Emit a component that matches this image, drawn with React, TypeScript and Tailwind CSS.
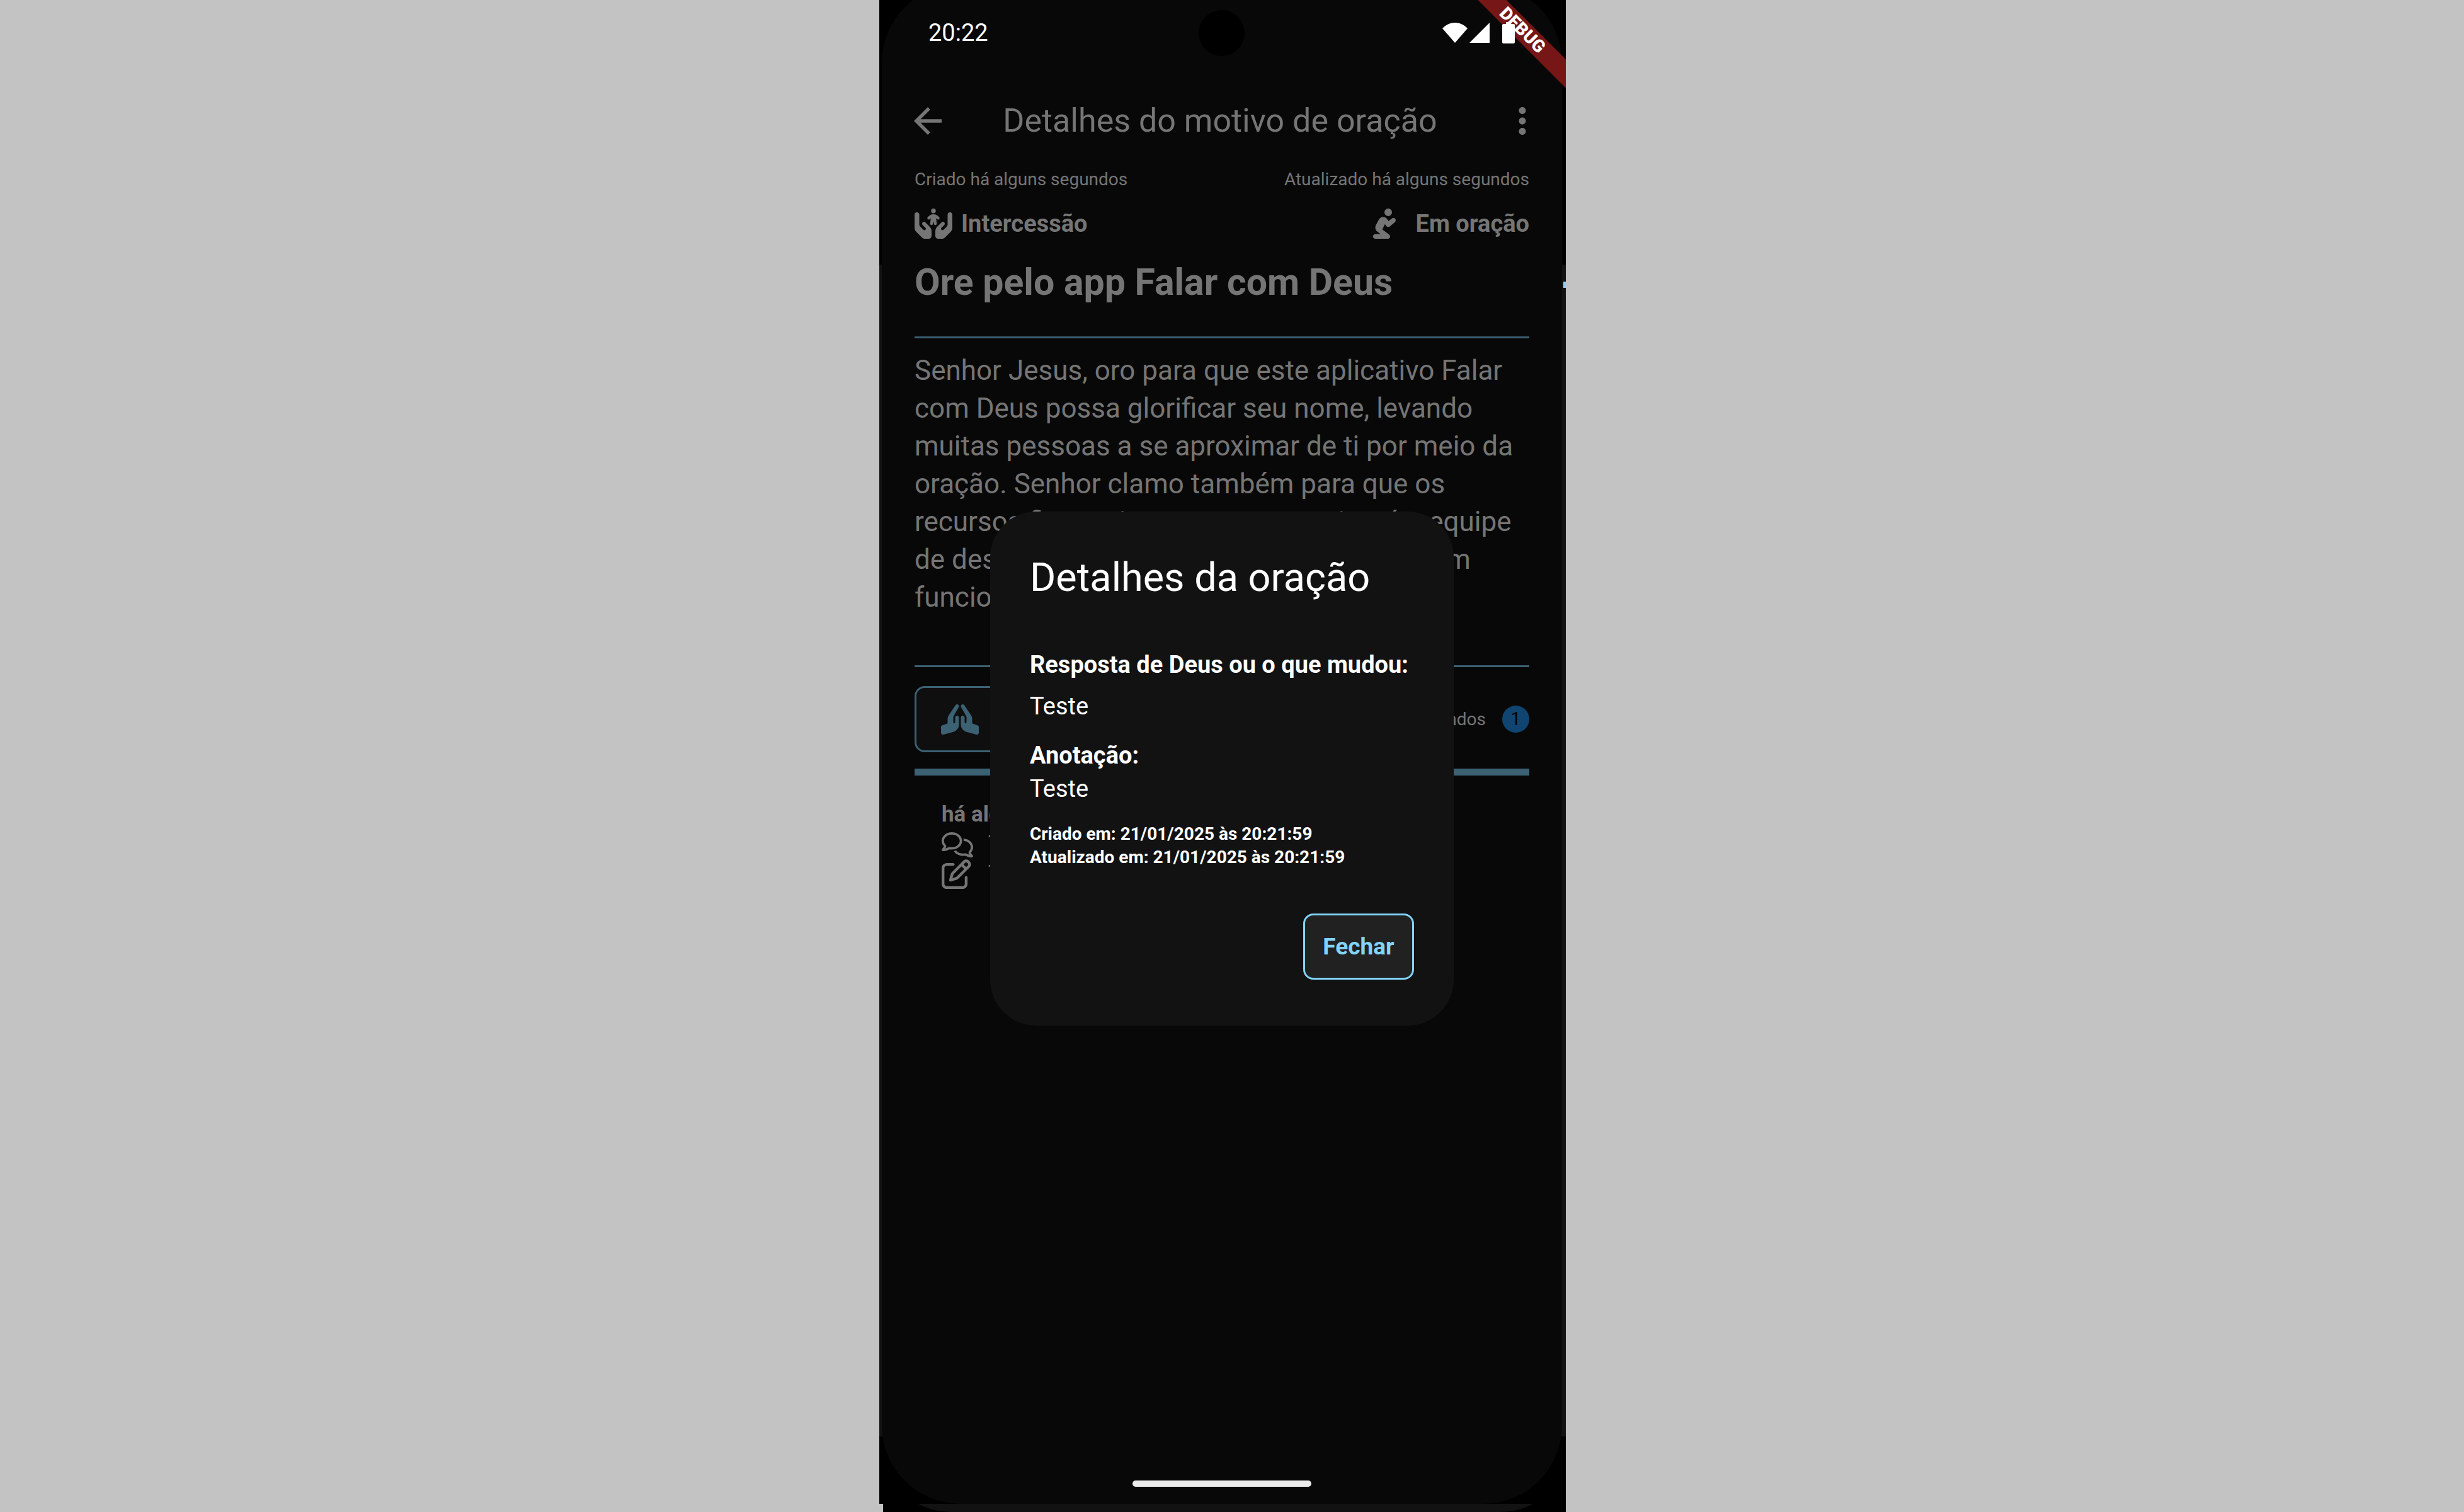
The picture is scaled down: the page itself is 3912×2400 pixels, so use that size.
import type { ReactNode } from "react";
import {
  FaHandsHoldingChild,
  FaHandsPraying,
  FaPersonPraying,
  FaRegComments,
  FaRegPenToSquare,
} from "react-icons/fa6";
import { MdArrowBack, MdMoreVert } from "react-icons/md";

function StatusBar() {
  return (
    <div className="flex h-[104px] items-center justify-between pl-[78px] text-white">
      <time className="text-[38px] leading-[46px]">20:22</time>
      <div className="flex h-8 w-[196px] items-center">
        <svg className="h-8 w-10" viewBox="0 0 40 32" fill="currentColor" aria-hidden="true">
          <path d="M20 32 0 9C12-3 28-3 40 9Z" />
        </svg>
        <svg className="ml-[3px] h-8 w-8" viewBox="0 0 32 32" fill="currentColor" aria-hidden="true">
          <path d="M32 0V32H0Z" />
        </svg>
        <svg className="relative z-10 ml-5 h-[34px] w-5" viewBox="0 0 20 34" fill="currentColor" aria-hidden="true">
          <path d="M6 0h8v3h4a2 2 0 0 1 2 2v27a2 2 0 0 1-2 2H2a2 2 0 0 1-2-2V5a2 2 0 0 1 2-2h4Z" />
        </svg>
      </div>
    </div>
  );
}

function Divider({ thick = false }: { thick?: boolean }) {
  return <hr className={thick ? "h-[11px] border-0 bg-[#3b6173]" : "h-[3px] border-0 bg-[#3b6173]"} />;
}

function Note({ icon, text }: { icon: ReactNode; text: string }) {
  return (
    <li className="flex h-[47px] items-center gap-5">
      <span className="w-[54px]">{icon}</span>
      <span className="text-[35px]">{text}</span>
    </li>
  );
}

function PrayerDialog() {
  return (
    <div
      role="dialog"
      aria-modal="true"
      aria-labelledby="dialog-title"
      className="absolute top-[812px] right-[178px] left-[176px] rounded-[73px] bg-[#121212] px-[63px] pt-[63px] pb-[73px] text-white"
    >
      <h2 id="dialog-title" className="text-[63px] leading-[84px]">
        Detalhes da oração
      </h2>
      <div className="mt-[70px] text-[38px] leading-[53px]">
        <p className="font-bold">Resposta de Deus ou o que mudou:</p>
        <p className="mt-[13px]">Teste</p>
        <p className="mt-[25px] font-bold">Anotação:</p>
        <p>Teste</p>
      </div>
      <div className="mt-[26px] text-[28px] leading-[37px] font-bold">
        <p>Criado em: 21/01/2025 às 20:21:59</p>
        <p>Atualizado em: 21/01/2025 às 20:21:59</p>
      </div>
      <div className="mt-[71px] flex justify-end">
        <button
          type="button"
          className="h-[105px] w-[176px] rounded-[16px] border-[3px] border-[#81d4fa] bg-[#212121] text-[37px] font-bold text-[#81d4fa]"
        >
          Fechar
        </button>
      </div>
    </div>
  );
}

export default function App() {
  return (
    <div className="flex min-h-screen justify-center bg-[#c3c3c3] pr-[30px] font-['Roboto',sans-serif]">
      <div className="relative w-full max-w-[1090px] overflow-hidden bg-black text-[#757575]">
        <div className="absolute inset-x-0 top-[420px] bottom-[120px] bg-[#121212]" />
        <div className="absolute -top-[25px] right-[6px] bottom-[13px] left-1 rounded-[125px] bg-[#080808]" />
        <div className="absolute inset-x-0 bottom-0 h-[13px] overflow-hidden">
          <div className="absolute -right-[8px] bottom-0 left-[2px] h-[240px] rounded-[112px] bg-[#121212]" />
        </div>
        <div className="absolute bottom-0 left-0 h-[13px] w-[6px] bg-[#c3c3c3]" />
        <div className="absolute top-[447px] right-0 h-[10px] w-1 bg-[#81d4fa]" />
        <div className="absolute top-[16px] left-[507px] size-[73px] rounded-full bg-black" />
        <div className="absolute top-[32px] left-[871px] flex h-[32px] w-[300px] rotate-45 items-center justify-center bg-[#761616] text-[28px] font-black text-white">
          DEBUG
        </div>

        <div className="relative">
          <StatusBar />
          <header className="flex h-[176px] items-center justify-between pr-[36px] pl-[44px]">
            <button type="button" aria-label="Voltar">
              <MdArrowBack className="size-[66px]" />
            </button>
            <h1 className="pr-4 text-[52px]">Detalhes do motivo de oração</h1>
            <button type="button" aria-label="Mais opções">
              <MdMoreVert className="size-[66px]" />
            </button>
          </header>

          <main className="mr-[58px] ml-[56px] flex flex-col">
            <div className="-mt-[11px] flex justify-between text-[28px] leading-[32px]">
              <span>Criado há alguns segundos</span>
              <span>Atualizado há alguns segundos</span>
            </div>
            <div className="mt-[30px] flex h-[48px] items-center justify-between text-[38px] font-bold">
              <span className="flex items-center gap-[14px]">
                <FaHandsHoldingChild className="h-[48px] w-[60px]" />
                Intercessão
              </span>
              <span className="flex items-center gap-[26px]">
                <FaPersonPraying className="size-[48px]" />
                Em oração
              </span>
            </div>
            <h2 className="mt-[29px] mb-[46px] text-[59px] leading-[80px] font-bold">Ore pelo app Falar com Deus</h2>
            <Divider />
            <p className="mt-[21px] mb-[78px] text-[44px] leading-[60px] whitespace-nowrap">
              Senhor Jesus, oro para que este aplicativo Falar
              <br />
              com Deus possa glorificar seu nome, levando
              <br />
              muitas pessoas a se aproximar de ti por meio da
              <br />
              oração. Senhor clamo também para que os
              <br />
              recursos financeiros possam seguir até a equipe
              <br />
              de desenvolvimento e que o app continue em
              <br />
              funcionamento.
            </p>
            <Divider />
            <div className="mt-[30px] mb-[26px] flex items-center justify-between">
              <button
                type="button"
                className="flex h-[105px] w-[300px] items-center gap-[18px] rounded-[16px] border-[3px] border-[#3b6173] bg-[#0f0f0f] pl-[39px] text-[37px] font-bold text-[#3b6173]"
              >
                <FaHandsPraying className="h-[48px] w-[60px]" />
                Orar
              </button>
              <div className="flex items-center gap-[26px]">
                <span className="text-[28px]">há alguns segundos</span>
                <span className="flex size-[43px] items-center justify-center rounded-full bg-[#0f4570] text-[29px] text-black">
                  1
                </span>
              </div>
            </div>
            <Divider thick />
            <section className="mt-[38px] pl-[43px]">
              <h3 className="text-[35px] leading-[48px] font-bold">há alguns segundos</h3>
              <ul>
                <Note icon={<FaRegComments className="h-[40px] w-[50px]" />} text="Teste" />
                <Note icon={<FaRegPenToSquare className="size-[47px]" />} text="Teste" />
              </ul>
            </section>
          </main>
        </div>

        <PrayerDialog />
        <div className="absolute bottom-[40px] left-[402px] h-[10px] w-[284px] rounded-full bg-[#ebebeb]" />
      </div>
    </div>
  );
}
